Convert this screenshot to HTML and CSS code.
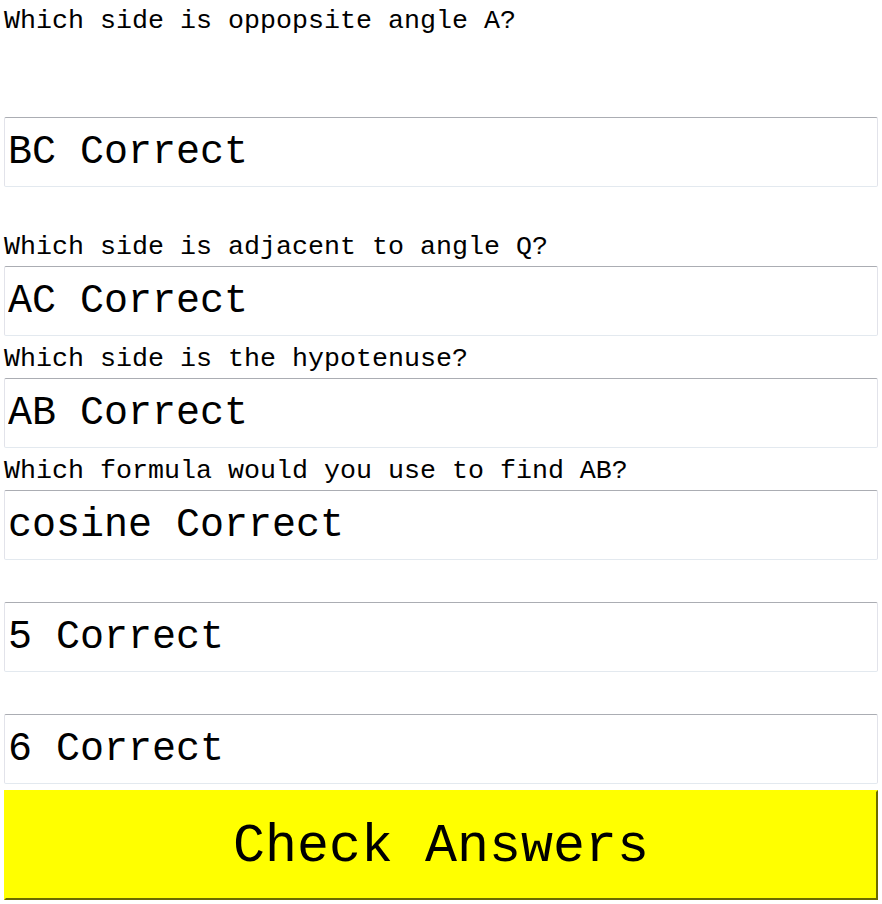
FILE: index.html
```html
<!DOCTYPE html>
<html>
<head>
<meta charset="utf-8">
<link rel="stylesheet" href="styles.css">
</head>
<body>
<form class="quiz">
  <div class="q q-first">
    <label class="label label-first">Which side is oppopsite angle A?</label>
    <input class="answer" type="text" value="BC Correct">
  </div>
  <div class="q">
    <label class="label">Which side is adjacent to angle Q?</label>
    <input class="answer" type="text" value="AC Correct">
  </div>
  <div class="q">
    <label class="label">Which side is the hypotenuse?</label>
    <input class="answer" type="text" value="AB Correct">
  </div>
  <div class="q">
    <label class="label">Which formula would you use to find AB?</label>
    <input class="answer" type="text" value="cosine Correct">
  </div>
  <div class="q">
    <label class="label"></label>
    <input class="answer" type="text" value="5 Correct">
  </div>
  <div class="q">
    <label class="label"></label>
    <input class="answer" type="text" value="6 Correct">
  </div>
  <button class="check" type="button">Check Answers</button>
</form>
</body>
</html>
```

FILE: styles.css
```css
html, body {
  margin: 0;
  padding: 0;
  background: #ffffff;
}

body {
  padding: 0 4px;
  font-family: "Courier New", "Liberation Mono", monospace;
  color: #000000;
}

.quiz {
  display: flex;
  flex-direction: column;
}

.q {
  display: flex;
  flex-direction: column;
}

.q-first {
  margin-bottom: 37px;
}

.label {
  display: block;
  box-sizing: border-box;
  height: 42px;
  padding-top: 2px;
  line-height: 42px;
  font-size: 26.67px;
  white-space: pre;
}

.label-first {
  height: 38px;
  line-height: 38px;
  margin-bottom: 79px;
}

.answer {
  box-sizing: border-box;
  display: block;
  width: 100%;
  height: 70px;
  margin: 0;
  padding: 0 3px;
  font-family: "Courier New", "Liberation Mono", monospace;
  font-size: 40px;
  color: #000000;
  background: #ffffff;
  border: 1px solid #e2e3ea;
  border-top-color: #abadb3;
  border-bottom-color: #e3e9ef;
  border-radius: 2px;
  outline: none;
}

.check {
  box-sizing: border-box;
  display: block;
  width: 100%;
  height: 110px;
  margin: 6px 0 0 0;
  padding: 3px 0 0 0;
  font-family: "Courier New", "Liberation Mono", monospace;
  font-size: 53.33px;
  color: #000000;
  background: #ffff00;
  border: 2px solid #ffff00;
  border-right-color: #6b6b00;
  border-bottom-color: #6b6b00;
  border-radius: 0;
  cursor: pointer;
}
```
